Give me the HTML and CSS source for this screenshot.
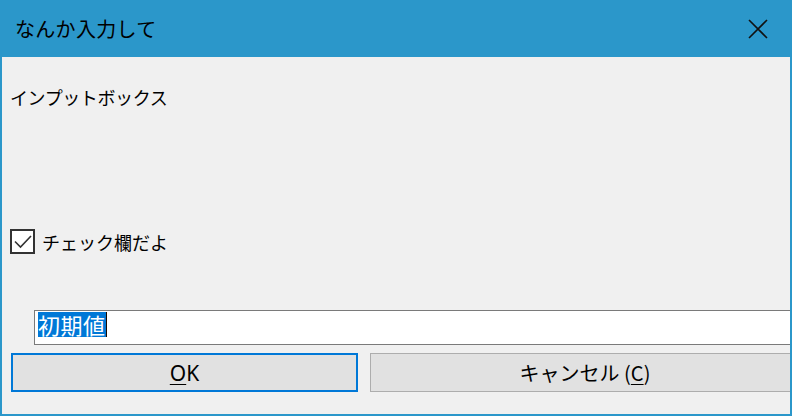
FILE: index.html
```html
<!DOCTYPE html>
<html lang="ja">
<head>
  <meta charset="UTF-8" />
  <title>なんか入力して</title>
  <link rel="stylesheet" href="styles.css">
</head>
<body>

  <div class="ventana">
    <!-- barra de titulo -->
    <div class="titulo">
      <span class="titulo-texto">なんか入力して</span>
      <svg class="cerrar" width="20" height="20" viewBox="0 0 20 20">
        <path d="M1 1 L19 19 M19 1 L1 19" stroke="#111" stroke-width="1.6" fill="none"/>
      </svg>
    </div>

    <div class="contenido">
      <div class="mensaje">インプットボックス</div>

      <div class="fila-check">
        <span class="casilla">
          <svg width="21" height="21" viewBox="0 0 21 21">
            <path d="M3 10.5 L8.5 16 L19 5" stroke="#333" stroke-width="1.6" fill="none"/>
          </svg>
        </span>
        <span class="check-texto">チェック欄だよ</span>
      </div>

      <div class="caja-texto">
        <span class="seleccion">初期値</span><span class="cursor"></span>
      </div>

      <div class="botones">
        <div class="boton boton-ok"><u>O</u>K</div>
        <div class="boton boton-cancelar">キャンセル (<u>C</u>)</div>
      </div>
    </div>
  </div>

</body>
</html>
```

FILE: styles.css
```css
body {
  margin: 0;
  background: #f0f0f0;
  font-family: "Noto Sans CJK JP", "Noto Sans", sans-serif;
  color: #000;
}

.ventana {
  width: 792px;
  height: 416px;
  box-sizing: border-box;
  border: 2px solid #2b97ca;
  border-top: none;
  overflow: hidden;
  background: #f0f0f0;
}

.titulo {
  height: 57px;
  background: #2b97ca;
  display: flex;
  align-items: center;
  justify-content: space-between;
  padding: 0 25px 0 15px;
  margin: 0 -2px;
}

.titulo-texto {
  font-size: 20px;
  line-height: 24px;
  margin-top: 1px;
  letter-spacing: 0.3px;
}

.cerrar {
  display: block;
  margin-right: -1px;
}

.contenido {
  width: 830px;
}

.mensaje {
  font-size: 18px;
  line-height: 24px;
  margin: 28px 0 0 8px;
  letter-spacing: -0.4px;
}

.fila-check {
  display: flex;
  align-items: center;
  gap: 7px;
  margin: 120px 0 0 8px;
  height: 25px;
}

.casilla {
  width: 25px;
  height: 25px;
  box-sizing: border-box;
  border: 2px solid #333;
  background: #fff;
  display: flex;
  align-items: center;
  justify-content: center;
}

.casilla svg {
  display: block;
}

.check-texto {
  font-size: 18px;
  line-height: 24px;
}

.caja-texto {
  margin: 56px 0 0 32px;
  width: 780px;
  height: 35px;
  box-sizing: border-box;
  border: 1px solid #7a7a7a;
  background: #fff;
  padding: 1px 0 0 3px;
  display: flex;
  align-items: flex-start;
}

.seleccion {
  background: #0078d7;
  color: #fff;
  font-size: 22px;
  line-height: 25px;
  height: 25px;
  letter-spacing: 0.5px;
}

.cursor {
  width: 1px;
  height: 25px;
  background: #1a0a00;
}

.botones {
  display: flex;
  gap: 12px;
  margin: 8px 0 0 9px;
}

.boton {
  height: 39px;
  box-sizing: border-box;
  background: #e1e1e1;
  border: 1px solid #adadad;
  display: flex;
  align-items: center;
  justify-content: center;
  font-size: 20px;
}

.boton u {
  text-underline-offset: 3px;
  text-decoration-thickness: 1px;
}

.boton-ok {
  width: 347px;
  border: 2px solid #0078d7;
  font-family: "Noto Sans", sans-serif;
  font-size: 21px;
}

.boton-cancelar {
  width: 430px;
}
```
